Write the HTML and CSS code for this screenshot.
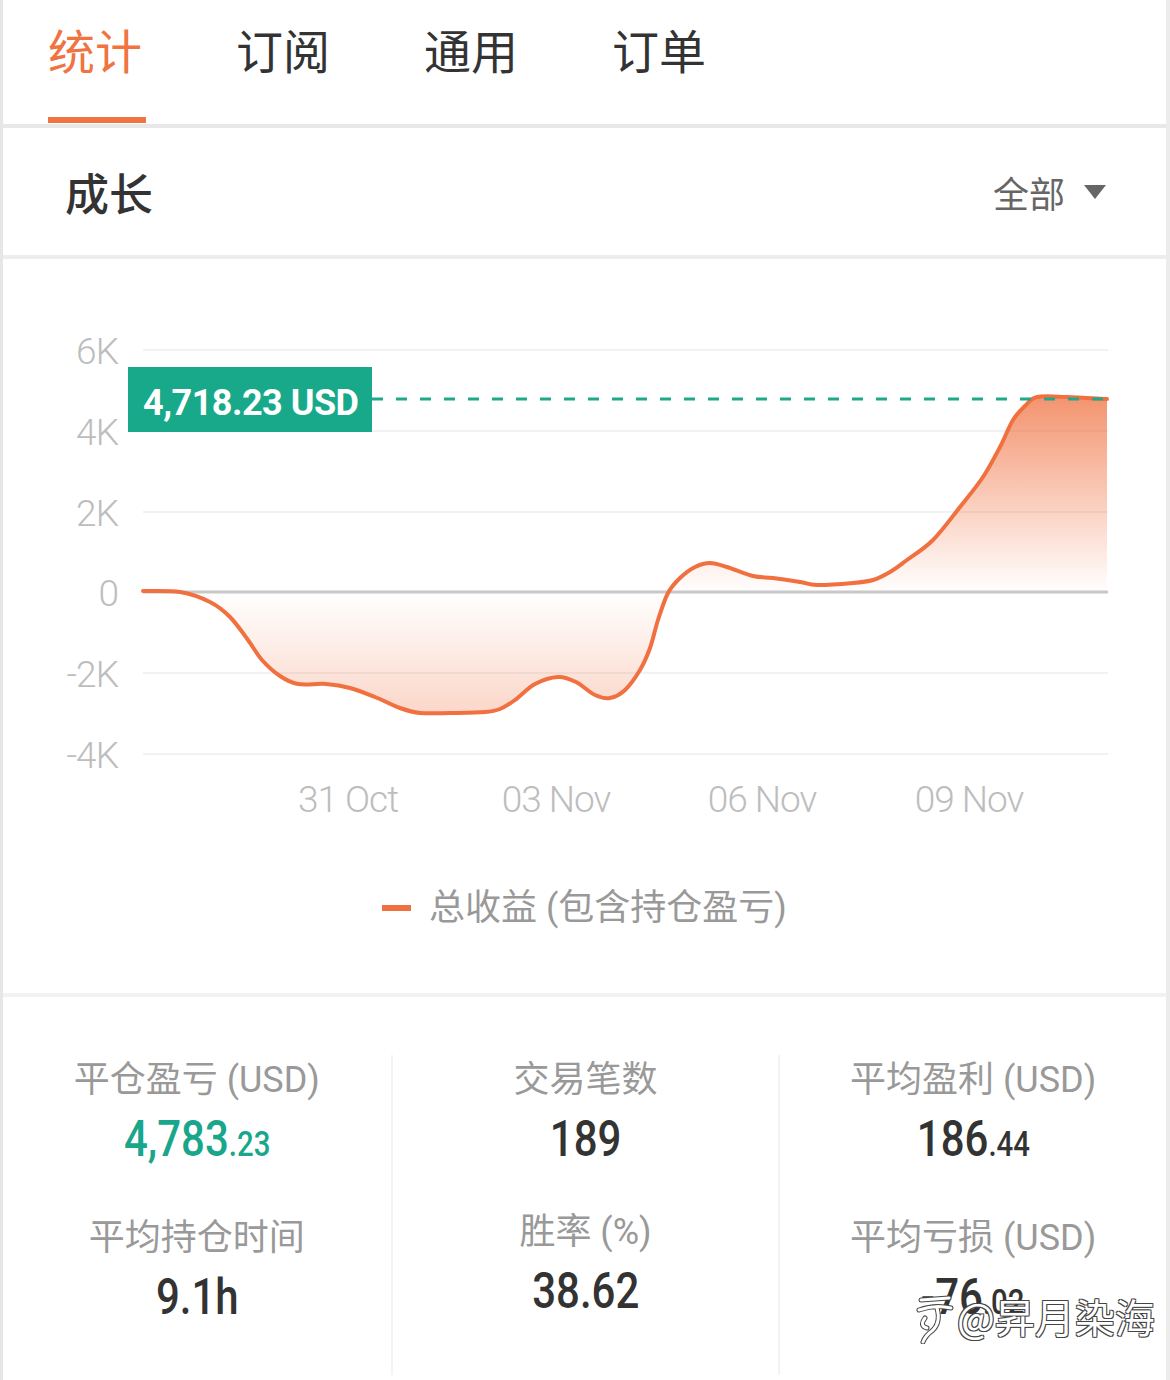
FILE: index.html
```html
<!DOCTYPE html>
<html lang="zh-CN">
<head>
  <meta charset="UTF-8" />
  <meta name="viewport" content="width=device-width, initial-scale=1.0" />
  <title>统计</title>
  <link rel="stylesheet" href="styles.css">
</head>
<body>

<div class="page">
  <!-- Tabs -->
  <nav class="tabs">
    <div class="tab active">统计</div>
    <div class="tab">订阅</div>
    <div class="tab">通用</div>
    <div class="tab">订单</div>
  </nav>

  <!-- Growth header -->
  <div class="section-head">
    <h2 class="section-title">成长</h2>
    <div class="range-select">全部 <span class="caret"></span></div>
  </div>

  <!-- Chart -->
  <div class="chart">
    <svg class="chart-svg" width="1163" height="581" viewBox="3 259 1163 581">
      <defs>
        <linearGradient id="fade" gradientUnits="userSpaceOnUse" x1="0" y1="397" x2="0" y2="730">
          <stop offset="0" stop-color="#f0703f" stop-opacity="0.75" />
          <stop offset="0.586" stop-color="#f0703f" stop-opacity="0" />
          <stop offset="1" stop-color="#f0703f" stop-opacity="0.32" />
        </linearGradient>
      </defs>

      <g class="grid">
        <line x1="143" y1="350" x2="1108" y2="350" />
        <line x1="143" y1="431" x2="1108" y2="431" />
        <line x1="143" y1="512" x2="1108" y2="512" />
        <line x1="143" y1="673" x2="1108" y2="673" />
        <line x1="143" y1="754" x2="1108" y2="754" />
      </g>

      <g class="y-labels">
        <text x="118" y="364">6K</text>
        <text x="118" y="445">4K</text>
        <text x="118" y="526">2K</text>
        <text x="118" y="606">0</text>
        <text x="118" y="687">-2K</text>
        <text x="118" y="768">-4K</text>
      </g>

      <g class="x-labels">
        <text x="348" y="812">31 Oct</text>
        <text x="556" y="812">03 Nov</text>
        <text x="762" y="812">06 Nov</text>
        <text x="969" y="812">09 Nov</text>
      </g>

      <path id="area" class="area" d="" />
      <line class="zero-line" x1="143" y1="592" x2="1108" y2="592" />
      <path id="curve" class="curve" d="" />

      <line class="current-line" x1="372" y1="399" x2="1107" y2="399" />
      <rect class="current-box" x="128" y="367" width="244" height="65" />
      <text class="current-text" x="143" y="415">4,718.23 USD</text>
    </svg>

    <div class="legend">
      <span class="legend-mark"></span>
      <span>总收益 (包含持仓盈亏)</span>
    </div>
  </div>

  <!-- Summary numbers -->
  <div class="stats">
    <div class="stat-col">
      <div class="stat-label">平仓盈亏 (USD)</div>
      <div class="stat-value green">4,783<small>.23</small></div>
      <div class="stat-label">平均持仓时间</div>
      <div class="stat-value">9.1h</div>
    </div>
    <div class="stat-col">
      <div class="stat-label">交易笔数</div>
      <div class="stat-value">189</div>
      <div class="stat-label">胜率 (%)</div>
      <div class="stat-value">38.62</div>
    </div>
    <div class="stat-col">
      <div class="stat-label">平均盈利 (USD)</div>
      <div class="stat-value">186<small>.44</small></div>
      <div class="stat-label">平均亏损 (USD)</div>
      <div class="stat-value">-76<small>.02</small></div>
    </div>

    <div class="watermark">
      <svg class="watermark-logo" width="40" height="56" viewBox="0 0 40 56">
        <path class="wm-under" d="M6 12 L34 10 M4 22 Q20 16 36 20 M22 20 Q26 34 18 42 Q10 48 8 54 M10 30 Q4 38 12 40" />
        <path class="wm-over" d="M6 12 L34 10 M4 22 Q20 16 36 20 M22 20 Q26 34 18 42 Q10 48 8 54 M10 30 Q4 38 12 40" />
      </svg>
      <span>@昇月染海</span>
    </div>
  </div>
</div>

<script>
  const points = [
    [143,591],[180,592],[210,602],[230,617],[248,640],[262,660],[280,676],[298,684],
    [326,684],[350,688],[375,697],[400,708],[420,713],[450,713],[485,712],[500,709],
    [515,700],[535,684],[558,677],[576,682],[595,695],[610,698],[625,690],[640,670],
    [650,648],[658,620],[668,593],[680,578],[695,567],[710,563],[727,567],[753,576],
    [773,578],[800,582],[817,585],[853,583],[873,580],[890,572],[907,560],[933,540],
    [960,507],[983,477],[1000,447],[1013,420],[1025,406],[1037,397],[1067,397],[1107,399]
  ];

  function smoothPath(p) {
    let d = `M${p[0][0]},${p[0][1]}`;
    for (let i = 0; i < p.length - 1; i++) {
      const p0 = p[i - 1] || p[i];
      const p1 = p[i];
      const p2 = p[i + 1];
      const p3 = p[i + 2] || p2;
      const c1x = p1[0] + (p2[0] - p0[0]) / 6;
      const c1y = p1[1] + (p2[1] - p0[1]) / 6;
      const c2x = p2[0] - (p3[0] - p1[0]) / 6;
      const c2y = p2[1] - (p3[1] - p1[1]) / 6;
      d += ` C${c1x.toFixed(1)},${c1y.toFixed(1)} ${c2x.toFixed(1)},${c2y.toFixed(1)} ${p2[0]},${p2[1]}`;
    }
    return d;
  }

  const line = smoothPath(points);
  document.getElementById('curve').setAttribute('d', line);
  document.getElementById('area').setAttribute('d', line + ' L1107,592 L143,592 Z');
</script>

</body>
</html>
```

FILE: styles.css
```css
body {
  margin: 0;
  padding: 0;
  background: #fff;
  font-family: Roboto, "Noto Sans CJK SC", sans-serif;
}

.page {
  width: 1170px;
  min-height: 1380px;
  box-sizing: border-box;
  border-left: 3px solid #e6e6e6;
  border-right: 4px solid #ececec;
  background: #fff;
}

/* tabs */
.tabs {
  display: flex;
  gap: 94px;
  height: 124px;
  padding-left: 45px;
  border-bottom: 4px solid #e8e8e8;
}

.tab {
  position: relative;
  padding-top: 21px;
  font-family: "Noto Sans CJK SC", sans-serif;
  font-size: 47px;
  line-height: 56px;
  color: #333;
}

.tab.active {
  color: #f07342;
}

.tab.active::after {
  content: "";
  position: absolute;
  left: 0;
  bottom: 1px;
  width: 98px;
  height: 6px;
  background: #f07342;
}

/* growth header */
.section-head {
  display: flex;
  justify-content: space-between;
  align-items: center;
  height: 127px;
  padding: 0 60px 0 62px;
  border-bottom: 4px solid #ededed;
}

.section-title {
  margin: 0;
  font-family: "Noto Sans CJK SC", sans-serif;
  font-size: 44px;
  font-weight: 500;
  color: #333;
}

.range-select {
  display: flex;
  align-items: center;
  gap: 19px;
  font-family: "Noto Sans CJK SC", sans-serif;
  font-size: 36px;
  color: #666;
}

.caret {
  width: 0;
  height: 0;
  border-left: 11px solid transparent;
  border-right: 11px solid transparent;
  border-top: 14px solid #666;
}

/* chart */
.chart {
  border-bottom: 4px solid #f2f2f2;
}

.chart-svg {
  display: block;
}

.grid line {
  stroke: #f2f2f2;
  stroke-width: 2;
}

.zero-line {
  stroke: #c8c8c8;
  stroke-width: 3;
}

.y-labels text,
.x-labels text {
  font-family: Roboto, sans-serif;
  font-weight: 300;
  font-size: 37px;
  letter-spacing: -1px;
  fill: #bdbdbd;
}

.y-labels text {
  text-anchor: end;
}

.x-labels text {
  text-anchor: middle;
}

.area {
  fill: url(#fade);
}

.curve {
  fill: none;
  stroke: #f07040;
  stroke-width: 4;
  stroke-linejoin: round;
  stroke-linecap: round;
}

.current-line {
  stroke: #1fa98a;
  stroke-width: 3;
  stroke-dasharray: 11 13;
}

.current-box {
  fill: #17a98a;
}

.current-text {
  font-family: Roboto, sans-serif;
  font-weight: 700;
  font-size: 36px;
  letter-spacing: -0.5px;
  fill: #fff;
}

.legend {
  display: flex;
  justify-content: center;
  align-items: center;
  gap: 18px;
  padding: 50px 0 67px;
  font-family: Roboto, "Noto Sans CJK SC", sans-serif;
  font-size: 36px;
  line-height: 36px;
  color: #999;
}

.legend-mark {
  width: 29px;
  height: 6px;
  background: #f07040;
}

/* summary numbers */
.stats {
  position: relative;
  display: grid;
  grid-template-columns: repeat(3, 1fr);
  padding: 58px 0 13px;
}

.stat-col {
  display: flex;
  flex-direction: column;
  align-items: center;
  padding: 5px 0 44px;
}

.stat-col + .stat-col {
  border-left: 2px solid #f3f3f3;
}

.stat-label {
  font-family: Roboto, "Noto Sans CJK SC", sans-serif;
  font-size: 36px;
  line-height: 40px;
  color: #999;
}

.stat-value {
  margin-top: 11px;
  margin-bottom: 45px;
  font-family: Roboto, sans-serif;
  font-size: 50px;
  font-weight: 500;
  line-height: 56px;
  color: #333;
  transform: scaleX(0.84);
}

.stat-value:last-child {
  margin-bottom: 0;
}

.stat-value small {
  font-size: 35px;
}

.stat-value.green {
  color: #1aa68a;
}

.watermark {
  position: absolute;
  left: 912px;
  top: 290px;
  display: flex;
  align-items: center;
  gap: 2px;
  font-family: "Noto Sans CJK SC", sans-serif;
  font-size: 40px;
  color: #fff;
  text-shadow: 1px 1px 0 #444, -1px -1px 0 #444, 1px -1px 0 #444, -1px 1px 0 #444;
}

.wm-under {
  fill: none;
  stroke: #444;
  stroke-width: 5;
  stroke-linecap: round;
}

.wm-over {
  fill: none;
  stroke: #fff;
  stroke-width: 3;
  stroke-linecap: round;
}
```
